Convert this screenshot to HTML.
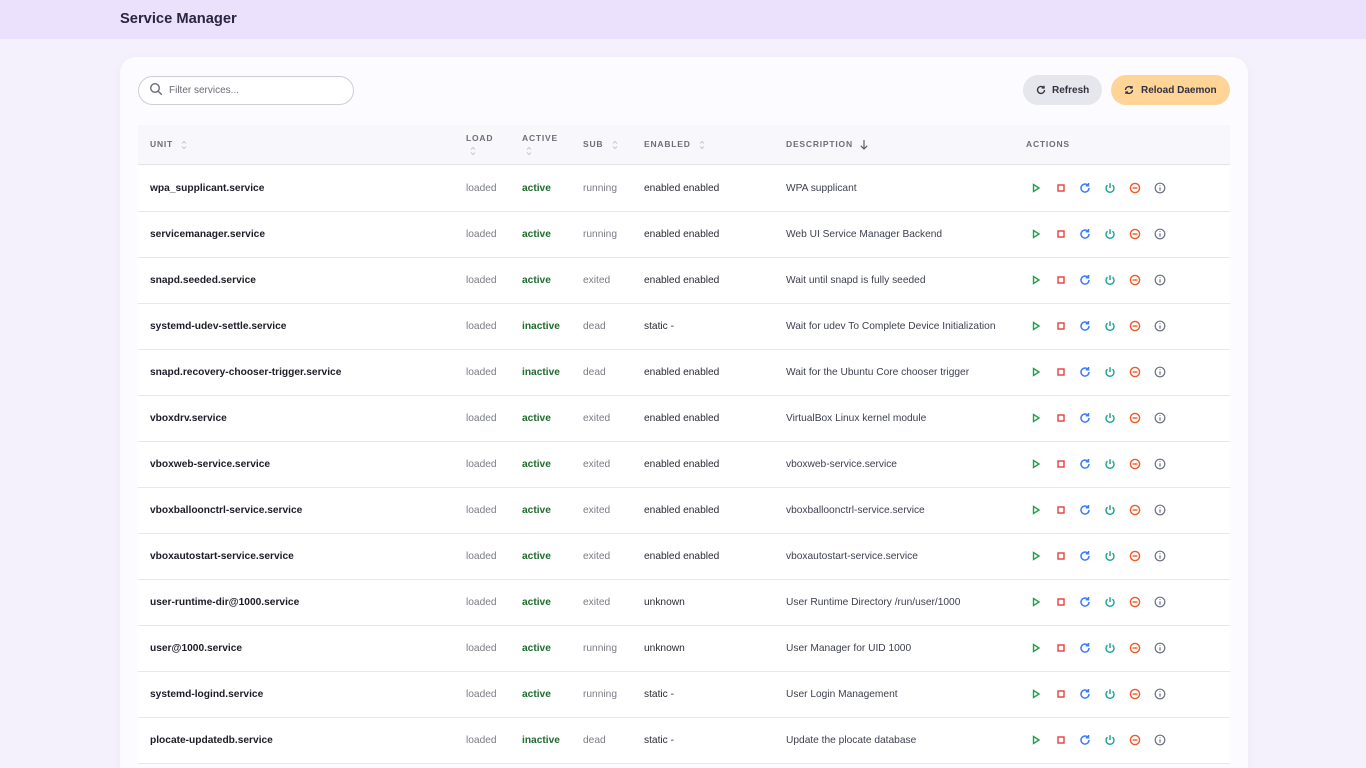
<!DOCTYPE html>
<html><head><meta charset="utf-8"><style>
*{box-sizing:border-box;margin:0;padding:0}
html,body{width:1366px;height:768px;overflow:hidden}
body{background:#f4f1fc;font-family:"Liberation Sans",sans-serif;position:relative}
.top{position:absolute;left:0;top:0;width:1366px;height:39px;background:#ebe1fd}
.top h1{position:absolute;left:120px;top:11px;font-size:14.7px;font-weight:bold;color:#2a2540}
.card{position:absolute;left:120px;top:57px;width:1128px;height:711px;background:#fcfbff;border-radius:16px 16px 0 0;box-shadow:0 2px 10px rgba(120,100,180,.06)}
.search{position:absolute;left:138px;top:76px;width:216px;height:29px;border:1px solid #cfcdd6;border-radius:15px;background:#fff}
.search span{position:absolute;left:30px;top:8px;font-size:10px;color:#6b6b75}
.btn{position:absolute;top:75px;height:30px;border-radius:15px;font-size:10px;font-weight:bold;color:#2f3140;line-height:30px}
.thead{position:absolute;left:138px;top:125px;width:1092px;height:40px;background:#f8f7fb;border-bottom:1px solid #e4e3ea}
.th{position:absolute;font-size:8.5px;letter-spacing:.8px;color:#6c6e7a;font-weight:bold}
.row{position:absolute;left:138px;width:1092px;height:46px;border-bottom:1px solid #e8e7ee;background:#fff}
.c{position:absolute;top:17px;font-size:10.2px;color:#7a7c86}
.u{left:12px;color:#1c1c28;font-weight:bold}
.a{color:#1f6b2e;font-weight:bold}
.e{color:#2a2a35}
.d{color:#3e4050}
.ic{position:absolute;top:16px}
.sa{display:inline-block;vertical-align:middle}
</style></head><body>
<div class="top"><h1>Service Manager</h1></div>
<div class="card"></div>
<div class="search"><svg style="position:absolute;left:10px;top:5px" width="14" height="14" viewBox="0 0 14 14" fill="none" stroke="#6b6b75" stroke-width="1.4"><circle cx="6" cy="6" r="4.3"/><path d="M9.2 9.2L12.8 12.8"/></svg><span>Filter services...</span></div>
<div class="btn" style="left:1023px;width:79px;background:#e6e7ec"><svg style="position:absolute;left:13px;top:10px" width="10" height="10" viewBox="0 0 10 10" fill="none" stroke="#2f3140" stroke-width="1.3"><path d="M8.5 5A3.5 3.5 0 1 1 7.5 2.5"/><path d="M8 0.8V3H5.8"/></svg><span style="position:absolute;left:29px;top:1px">Refresh</span></div>
<div class="btn" style="left:1111px;width:119px;background:#fed596"><svg style="position:absolute;left:13px;top:10px" width="10" height="10" viewBox="0 0 10 10" fill="none" stroke="#2f3140" stroke-width="1.3"><path d="M1.5 5A3.5 3.5 0 0 1 7.8 3"/><path d="M8.5 5A3.5 3.5 0 0 1 2.2 7"/><path d="M8 1v2H6M2 9V7h2"/></svg><span style="position:absolute;left:30px;top:1px">Reload Daemon</span></div>
<div class="thead" id="th"></div>
<div id="rows"></div>
<script>
const sa='<svg class="sa" width="6" height="10" viewBox="0 0 6 10" fill="none" stroke="#bbb" stroke-width="0.8"><path d="M1 3.5L3 1.5L5 3.5M1 6.5L3 8.5L5 6.5"/></svg>';
document.getElementById("th").innerHTML=`
<div class="th" style="left:12px;top:14px">UNIT <span style="margin-left:5px">${sa}</span></div>
<div class="th" style="left:328px;top:8px">LOAD<div style="margin:2px 0 0 4px">${sa}</div></div>
<div class="th" style="left:384px;top:8px">ACTIVE<div style="margin:2px 0 0 4px">${sa}</div></div>
<div class="th" style="left:445px;top:14px">SUB <span style="margin-left:5px">${sa}</span></div>
<div class="th" style="left:506px;top:14px">ENABLED <span style="margin-left:5px">${sa}</span></div>
<div class="th" style="left:648px;top:14px">DESCRIPTION <svg class="sa" style="margin-left:3px" width="10" height="11" viewBox="0 0 10 11" fill="none" stroke="#555" stroke-width="1.1"><path d="M5 1V10M1.8 6.8L5 10L8.2 6.8"/></svg></div>
<div class="th" style="left:888px;top:14px">ACTIONS</div>`;
const d=[["wpa_supplicant.service","active","running","enabled enabled","WPA supplicant"],
["servicemanager.service","active","running","enabled enabled","Web UI Service Manager Backend"],
["snapd.seeded.service","active","exited","enabled enabled","Wait until snapd is fully seeded"],
["systemd-udev-settle.service","inactive","dead","static -","Wait for udev To Complete Device Initialization"],
["snapd.recovery-chooser-trigger.service","inactive","dead","enabled enabled","Wait for the Ubuntu Core chooser trigger"],
["vboxdrv.service","active","exited","enabled enabled","VirtualBox Linux kernel module"],
["vboxweb-service.service","active","exited","enabled enabled","vboxweb-service.service"],
["vboxballoonctrl-service.service","active","exited","enabled enabled","vboxballoonctrl-service.service"],
["vboxautostart-service.service","active","exited","enabled enabled","vboxautostart-service.service"],
["user-runtime-dir@1000.service","active","exited","unknown","User Runtime Directory /run/user/1000"],
["user@1000.service","active","running","unknown","User Manager for UID 1000"],
["systemd-logind.service","active","running","static -","User Login Management"],
["plocate-updatedb.service","inactive","dead","static -","Update the plocate database"]];
const icons=`<svg class="ic" style="left:892px" width="12" height="12" viewBox="0 0 12 12" fill="none" stroke="#22a04b" stroke-width="1.4"><path d="M3.5 2.5L9 6L3.5 9.5Z"/></svg>
<svg class="ic" style="left:917px" width="12" height="12" viewBox="0 0 12 12" fill="none" stroke="#e53e3e" stroke-width="1.4"><rect x="3" y="3" width="6" height="6"/></svg>
<svg class="ic" style="left:941px" width="12" height="12" viewBox="0 0 12 12" fill="none" stroke="#3b7cf6" stroke-width="1.5"><path d="M10 6A4 4 0 1 1 8.8 3.2"/><path d="M9.5 1v2.8H6.8"/></svg>
<svg class="ic" style="left:966px" width="12" height="12" viewBox="0 0 12 12" fill="none" stroke="#14a08f" stroke-width="1.4"><path d="M6 1.2V6"/><path d="M3.5 3.2A4 4 0 1 0 8.5 3.2"/></svg>
<svg class="ic" style="left:991px" width="12" height="12" viewBox="0 0 12 12" fill="none" stroke="#f05a28" stroke-width="1.4"><circle cx="6" cy="6" r="4.6"/><path d="M3.6 6H8.4"/></svg>
<svg class="ic" style="left:1016px" width="12" height="12" viewBox="0 0 12 12" fill="none" stroke="#6b7080" stroke-width="1.2"><circle cx="6" cy="6" r="4.8"/><path d="M6 5.2V8.6M6 3.2v.8"/></svg>`;
let h="";d.forEach((r,i)=>{h+=`<div class="row" style="top:${166+i*46}px"><div class="c u">${r[0]}</div><div class="c" style="left:328px">loaded</div><div class="c a" style="left:384px">${r[1]}</div><div class="c" style="left:445px">${r[2]}</div><div class="c e" style="left:506px">${r[3]}</div><div class="c d" style="left:648px">${r[4]}</div>${icons}</div>`});
document.getElementById("rows").innerHTML=h;
</script>
</body></html>
